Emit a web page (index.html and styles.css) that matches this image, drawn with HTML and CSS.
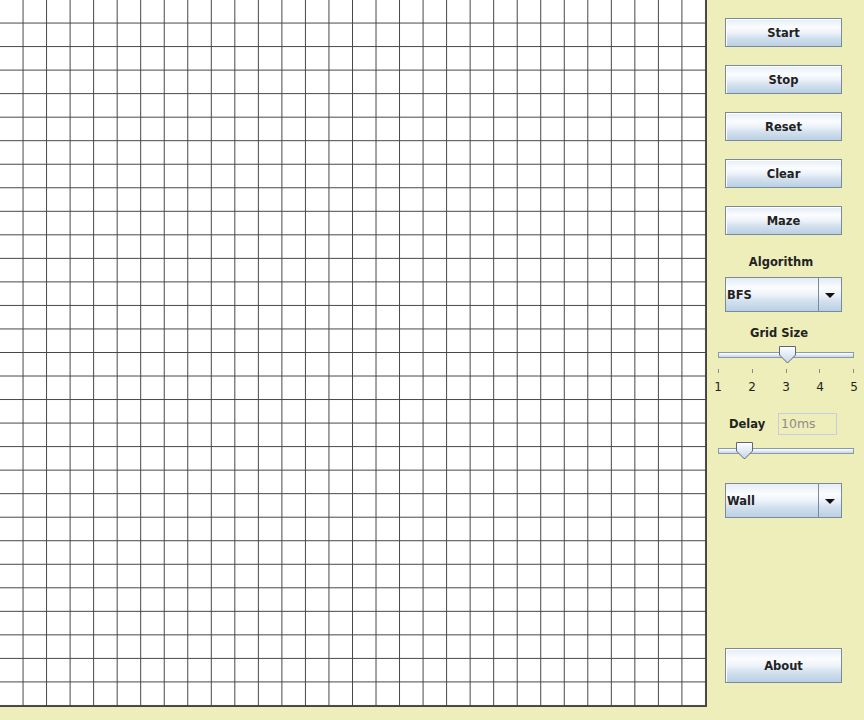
FILE: index.html
```html
<!DOCTYPE html>
<html>
<head>
<meta charset="utf-8">
<title>Pathfinding</title>
<link rel="stylesheet" href="styles.css">
</head>
<body>
<div class="app">
  <div class="board"></div>
  <div class="side">
    <button class="btn">Start</button>
    <button class="btn">Stop</button>
    <button class="btn">Reset</button>
    <button class="btn">Clear</button>
    <button class="btn">Maze</button>
    <div class="label">Algorithm</div>
    <div class="combo"><span class="combo-text">BFS</span><span class="combo-arrow"><span class="tri"></span></span></div>
    <div class="label label-grid">Grid Size</div>
    <div class="slider">
      <div class="track"></div>
      <svg class="thumb thumb-grid" width="17" height="18" viewBox="0 0 17 18">
        <defs><linearGradient id="tg1" x1="0" y1="0" x2="0" y2="1"><stop offset="0" stop-color="#ffffff"/><stop offset="1" stop-color="#c4d6e8"/></linearGradient></defs>
        <path d="M0.5 0.5 H16.5 V9 L8.5 17 L0.5 9 Z" fill="url(#tg1)" stroke="#5e6878"/>
      </svg>
    </div>
    <div class="ticks"><span></span><span></span><span></span><span></span><span></span></div>
    <div class="tick-labels"><span>1</span><span>2</span><span>3</span><span>4</span><span>5</span></div>
    <div class="delay-row"><span class="delay-label">Delay</span><span class="field">10ms</span></div>
    <div class="slider slider-delay">
      <div class="track"></div>
      <svg class="thumb thumb-delay" width="17" height="18" viewBox="0 0 17 18">
        <defs><linearGradient id="tg2" x1="0" y1="0" x2="0" y2="1"><stop offset="0" stop-color="#ffffff"/><stop offset="1" stop-color="#c4d6e8"/></linearGradient></defs>
        <path d="M0.5 0.5 H16.5 V9 L8.5 17 L0.5 9 Z" fill="url(#tg2)" stroke="#5e6878"/>
      </svg>
    </div>
    <div class="combo combo-wall"><span class="combo-text">Wall</span><span class="combo-arrow"><span class="tri"></span></span></div>
    <button class="btn btn-about">About</button>
  </div>
</div>
</body>
</html>
```

FILE: styles.css
```css
html, body {
  margin: 0;
  padding: 0;
  background: #eeeebb;
  font-family: "DejaVu Sans", "Liberation Sans", sans-serif;
}

.app {
  display: flex;
  width: 864px;
  height: 720px;
  overflow: hidden;
}

.board {
  flex: none;
  width: 707px;
  height: 707px;
  background-color: #ffffff;
  background-image:
    linear-gradient(to right, transparent calc(100% - 1px), #444 calc(100% - 1px)),
    linear-gradient(to bottom, transparent calc(100% - 1px), #444 calc(100% - 1px));
  background-size: calc(706px / 30) calc(706px / 30);
  background-repeat: repeat;
  box-sizing: border-box;
  border-right: 1px solid #444;
  border-bottom: 1px solid #444;
}

.side {
  flex: 1;
  display: flex;
  flex-direction: column;
  padding: 18px 0 37px 0;
  box-sizing: border-box;
  height: 720px;
}

.btn {
  flex: none;
  margin: 0 0 18px 18px;
  width: 117px;
  height: 29px;
  padding: 0;
  border: 1px solid #7a8a99;
  background: linear-gradient(to bottom, #e4ecf5 0%, #fbfdff 30%, #eef3f9 50%, #d3e1ee 70%, #b9cfe4 100%);
  font-family: "DejaVu Sans", "Liberation Sans", sans-serif;
  font-weight: bold;
  font-size: 11.5px;
  color: #222;
  box-shadow: inset 1px 1px 0 #ffffff;
}

.btn-about {
  margin-top: auto;
  margin-bottom: 0;
  height: 35px;
}

.label {
  margin: 2px 0 0 18px;
  width: 112px;
  text-align: center;
  font-weight: bold;
  font-size: 11.5px;
  line-height: 14px;
  color: #222;
}

.label-grid {
  margin-top: 14px;
  width: 108px;
}

.combo {
  flex: none;
  display: flex;
  margin: 8px 0 0 18px;
  width: 117px;
  height: 35px;
  box-sizing: border-box;
  border: 1px solid #7a8a99;
  background: linear-gradient(to bottom, #e4ecf5 0%, #fbfdff 30%, #eef3f9 50%, #d3e1ee 70%, #b9cfe4 100%);
}

.combo-wall {
  margin-top: 23px;
}

.combo-text {
  flex: 1;
  display: flex;
  align-items: center;
  padding-left: 1px;
  font-weight: bold;
  font-size: 11.5px;
  color: #222;
}

.combo-arrow {
  flex: none;
  width: 22px;
  display: flex;
  align-items: center;
  justify-content: center;
  border-left: 1px solid #7a8a99;
}

.tri {
  width: 0;
  height: 0;
  border-left: 5px solid transparent;
  border-right: 5px solid transparent;
  border-top: 5px solid #111;
  margin-top: 2px;
}

.slider {
  position: relative;
  flex: none;
  margin: 6px 0 0 11px;
  width: 136px;
  height: 18px;
}

.slider-delay {
  margin-top: 7px;
}

.track {
  margin-top: 6px;
  height: 6px;
  box-sizing: border-box;
  border: 1px solid #8a9aaa;
  background: linear-gradient(to bottom, #ffffff, #c6d6e6);
}

.thumb {
  position: absolute;
  top: 0;
}

.thumb-grid { left: 61px; }
.thumb-delay { left: 18px; }

.ticks {
  display: flex;
  justify-content: space-between;
  margin: 5px 0 0 11px;
  width: 136px;
  height: 4px;
}

.ticks span {
  width: 1px;
  height: 4px;
  background: #8a8a8a;
}

.tick-labels {
  display: flex;
  justify-content: space-between;
  margin: 7px 0 0 6px;
  width: 146px;
  font-size: 12px;
  line-height: 14px;
  color: #222;
}

.tick-labels span {
  width: 10px;
  text-align: center;
}

.delay-row {
  display: flex;
  align-items: center;
  margin: 19px 0 0 22px;
  height: 22px;
}

.delay-label {
  width: 49px;
  font-weight: bold;
  font-size: 11.5px;
  color: #222;
}

.field {
  width: 59px;
  height: 22px;
  box-sizing: border-box;
  border: 1px solid #c0d0e0;
  padding-left: 2px;
  font-size: 12.5px;
  line-height: 20px;
  color: #8c8c8c;
}
```
